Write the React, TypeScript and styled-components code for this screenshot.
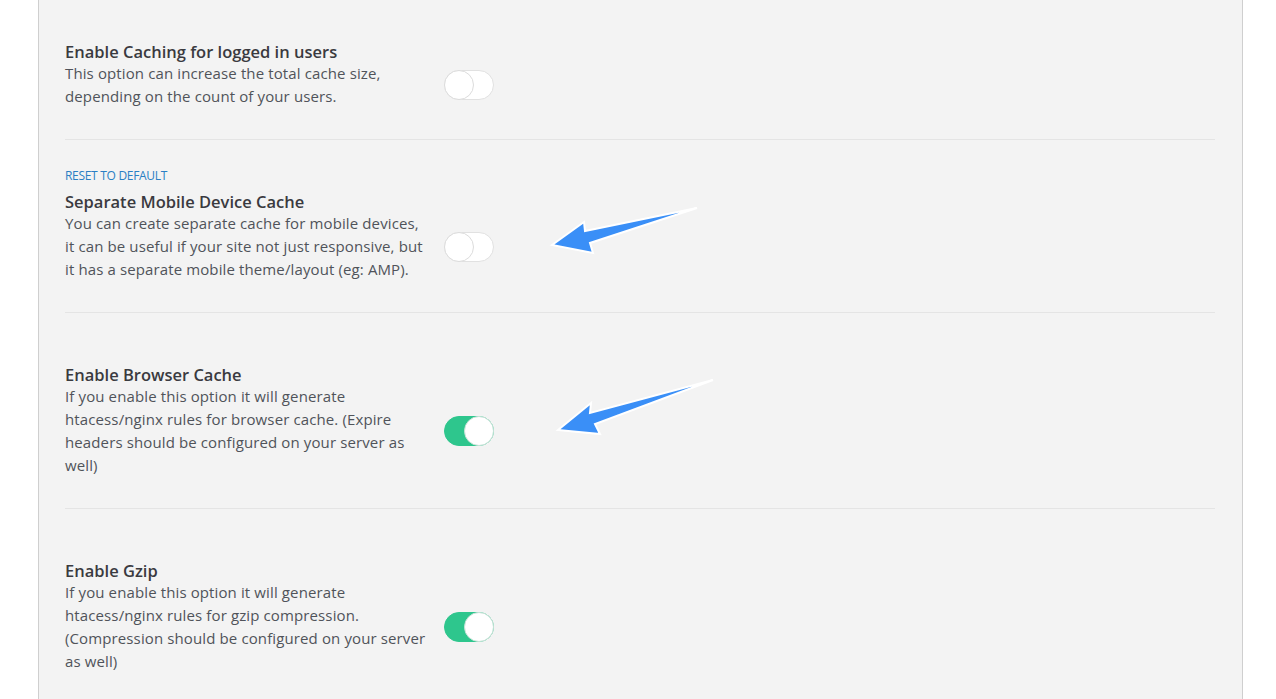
import React from "react";
import styled, { createGlobalStyle } from "styled-components";

const GlobalStyle = createGlobalStyle`
  html, body { margin: 0; padding: 0; background: #ffffff; }
  body { font-family: "Open Sans", "Noto Sans", "DejaVu Sans", sans-serif; overflow: hidden; }
`;

const Stage = styled.div`
  position: relative;
  width: 1276px;
  height: 699px;
  overflow: hidden;
`;

const Panel = styled.div`
  margin: -10px 0 0 38px;
  width: 1205px;
  background: #f3f3f3;
  border-left: 1px solid #cfcfcf;
  border-right: 1px solid #cfcfcf;
  padding: 0 27px 0 26px;
  box-sizing: border-box;
  min-height: 760px;
`;

const Row = styled.div`
  padding: 28px 0 31px;
  border-bottom: 1px solid #e4e4e4;
`;

const ResetLabel = styled.div<{ $visible: boolean }>`
  font-size: 12px;
  line-height: 16px;
  height: 16px;
  text-transform: uppercase;
  color: #2a7fc4;
  margin-bottom: 7px;
  letter-spacing: -0.3px;
  visibility: ${(p) => (p.$visible ? "visible" : "hidden")};
`;

const Title = styled.div`
  font-size: 16.5px;
  line-height: 21px;
  font-weight: 600;
  color: #3a3a3f;
`;

const Body = styled.div`
  display: flex;
  align-items: center;
`;

const Description = styled.div`
  width: 379px;
  font-size: 15px;
  line-height: 23px;
  color: #50535a;
  letter-spacing: 0.12px;
  white-space: nowrap;
`;

const Track = styled.div<{ $on: boolean }>`
  position: relative;
  width: 50px;
  height: 30px;
  border-radius: 15px;
  box-sizing: border-box;
  background: ${(p) => (p.$on ? "#2ec68d" : "#ffffff")};
  border: 1px solid ${(p) => (p.$on ? "#2ec68d" : "#e1e1e1")};
  flex-shrink: 0;
`;

const Knob = styled.div<{ $on: boolean }>`
  position: absolute;
  top: -1px;
  left: ${(p) => (p.$on ? "19px" : "-1px")};
  width: 30px;
  height: 30px;
  border-radius: 50%;
  background: #ffffff;
  box-sizing: border-box;
  border: 1px solid ${(p) => (p.$on ? "#c9e2d8" : "#dcdcdc")};
`;

const ArrowLayer = styled.svg`
  position: absolute;
  left: 0;
  top: 0;
  pointer-events: none;
`;

type Setting = {
  title: string;
  lines: string[];
  on: boolean;
  reset?: boolean;
};

const settings: Setting[] = [
  {
    title: "Enable Caching for logged in users",
    lines: ["This option can increase the total cache size,", "depending on the count of your users."],
    on: false,
  },
  {
    title: "Separate Mobile Device Cache",
    lines: [
      "You can create separate cache for mobile devices,",
      "it can be useful if your site not just responsive, but",
      "it has a separate mobile theme/layout (eg: AMP).",
    ],
    on: false,
    reset: true,
  },
  {
    title: "Enable Browser Cache",
    lines: [
      "If you enable this option it will generate",
      "htacess/nginx rules for browser cache. (Expire",
      "headers should be configured on your server as",
      "well)",
    ],
    on: true,
  },
  {
    title: "Enable Gzip",
    lines: [
      "If you enable this option it will generate",
      "htacess/nginx rules for gzip compression.",
      "(Compression should be configured on your server",
      "as well)",
    ],
    on: true,
  },
];

const Toggle = ({ on }: { on: boolean }) => (
  <Track $on={on}>
    <Knob $on={on} />
  </Track>
);

export default function App() {
  return (
    <Stage>
      <GlobalStyle />
      <Panel>
        {settings.map((s) => (
          <Row key={s.title}>
            <ResetLabel $visible={!!s.reset}>Reset to default</ResetLabel>
            <Title>{s.title}</Title>
            <Body>
              <Description>
                {s.lines.map((l, i) => (
                  <React.Fragment key={i}>
                    {l}
                    {i < s.lines.length - 1 && <br />}
                  </React.Fragment>
                ))}
              </Description>
              <Toggle on={s.on} />
            </Body>
          </Row>
        ))}
      </Panel>
      <ArrowLayer width="1276" height="699" viewBox="0 0 1276 699">
        <polygon
          points="552,245 584,222 585,231 697,208 590,243 593,253"
          fill="#3a8ff7"
          stroke="#ffffff"
          strokeWidth="2"
          strokeLinejoin="miter"
        />
        <polygon
          points="558,430 591,403 590,413 713,380 595,424 600,434"
          fill="#3a8ff7"
          stroke="#ffffff"
          strokeWidth="2"
          strokeLinejoin="miter"
        />
      </ArrowLayer>
    </Stage>
  );
}
